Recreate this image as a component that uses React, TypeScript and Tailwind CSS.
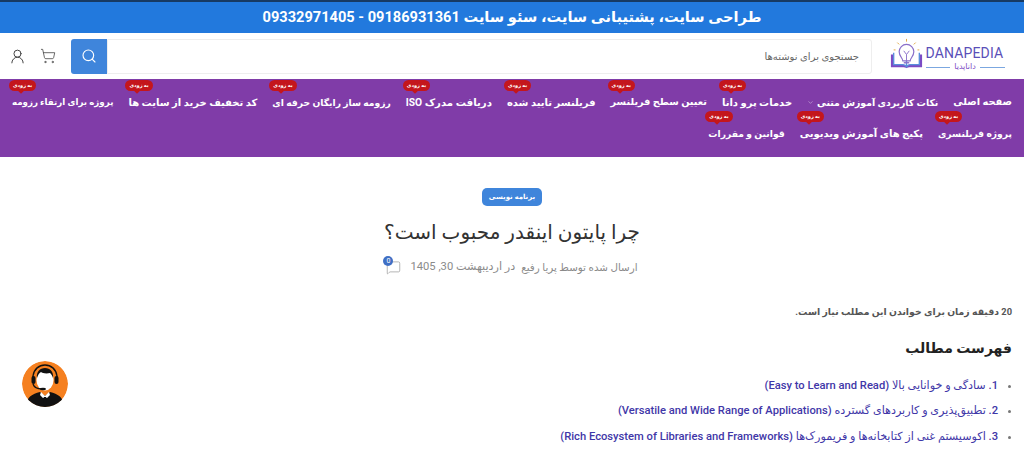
import { Search, ShoppingCart, UserRound, ChevronDown, MessageSquare } from "lucide-react"

const font = "font-['Roboto','DejaVu_Sans',sans-serif]"

const row1 = [
  { label: "صفحه اصلی", size: "text-[9.8px]" },
  { label: "نکات کاربردی آموزش متنی", chevron: true, size: "text-[9.3px]" },
  { label: "خدمات پرو دانا", badge: true, size: "text-[10px]" },
  { label: "تعیین سطح فریلنسر", badge: true, size: "text-[9.7px]" },
  { label: "فریلنسر تایید شده", badge: true, size: "text-[10px]" },
  { label: "دریافت مدرک ISO", badge: true, size: "text-[10.2px]" },
  { label: "رزومه ساز رایگان حرفه ای", badge: true, size: "text-[9.2px]" },
  { label: "کد تخفیف خرید از سایت ها", badge: true, size: "text-[10px]" },
  { label: "پروژه برای ارتقاء رزومه", badge: true, size: "text-[8.7px]" },
]

const row2 = [
  { label: "پروژه فریلنسری", badge: true, size: "text-[9.2px]" },
  { label: "پکیج های آموزش ویدیویی", badge: true, size: "text-[10px]" },
  { label: "قوانین و مقررات", badge: true, size: "text-[9.2px]" },
]

const toc = [
  "1. سادگی و خوانایی بالا (Easy to Learn and Read)",
  "2. تطبیق‌پذیری و کاربردهای گسترده (Versatile and Wide Range of Applications)",
  "3. اکوسیستم غنی از کتابخانه‌ها و فریمورک‌ها (Rich Ecosystem of Libraries and Frameworks)",
]

function NavItem({ label, badge, chevron, size }: { label: string; badge?: boolean; chevron?: boolean; size: string }) {
  return (
    <div className={`relative flex items-center gap-[3px] h-[31px] whitespace-nowrap font-bold text-white ${size}`}>
      {badge && (
        <span className="absolute -top-[7px] -left-[3px] h-[11px] px-[4px] rounded-full bg-[#c4161c] text-[5px] leading-[11px] text-white">
          به زودی
          <span className="absolute left-[10px] -bottom-[1.5px] w-[4px] h-[4px] rotate-45 bg-[#c4161c]" />
        </span>
      )}
      <span>{label}</span>
      {chevron && <ChevronDown size={7} strokeWidth={1.5} className="text-white/80" />}
    </div>
  )
}

function Logo() {
  return (
    <div className="flex items-start gap-[3px] -mt-[2px]" dir="ltr">
      <svg width="33" height="33" viewBox="0 0 36 34" fill="none">
        <path d="M1 17v14h14c2 0 3 1 3 1s1-1 3-1h14V17h-3v11H22c-2 0-4 2-4 2s-2-2-4-2H4V17z" fill="#7b4bc4" />
        <path d="M4 15v13h10c2 0 4 2 4 2V22" stroke="#5a8fdc" strokeWidth="1.5" />
        <path d="M32 15v13H22c-2 0-4 2-4 2" stroke="#5a8fdc" strokeWidth="1.5" />
        <path d="M14 24c0-3-4-5-4-10a8 8 0 0 1 16 0c0 5-4 7-4 10z" stroke="#8a6fc9" strokeWidth="1.3" fill="#fff" />
        <path d="M15 13l3 4 3-4M18 17v7" stroke="#8a6fc9" strokeWidth="1" />
        <path d="M15 26h6" stroke="#8a6fc9" strokeWidth="1.5" />
        <path d="M18 0v3M8 4l2 2M28 4l-2 2M4 12h2M30 12h2" stroke="#e0a33a" strokeWidth="1" />
      </svg>
      <div className="flex flex-col items-stretch w-[79px] pt-[8px]">
        <span className="font-['Roboto',sans-serif] text-[14px] leading-[15px] font-normal tracking-[0.15px] text-[#5a4fb8]">DANAPEDIA</span>
        <div className="flex items-center gap-1 mt-[1px]">
          <span className="h-px flex-1 bg-[#7ba7e0]" />
          <span className="text-[8px] leading-[10px] text-[#7b4bc4]">داناپدیا</span>
          <span className="h-px flex-1 bg-[#7ba7e0]" />
        </div>
      </div>
    </div>
  )
}

function Operator() {
  return (
    <svg width="46" height="46" viewBox="0 0 46 46" className="rounded-full">
      <circle cx="23" cy="23" r="23" fill="#f58020" />
      <path d="M4 44c1-8 6-11 14-13l5 4 5-4c8 2 13 5 14 13-5 2-12 2-19 2S9 46 4 44z" fill="#111" />
      <path d="M19 31l4 4 4-4 1 3-3 3-2-1-2 1-3-3z" fill="#fff" />
      <path d="M22 36h2l1 7-2 2-2-2z" fill="#111" />
      <ellipse cx="23" cy="19" rx="8.5" ry="10.5" fill="#fff" />
      <path d="M15 17c-1-6 3-10 8-10s9 4 8 10c-1-3-2-4-3-5-4 1-8 0-9-1-2 1-3 3-4 6z" fill="#111" />
      <path d="M11 21v-6C12 8 17 4 23 4s11 4 12 11v6" stroke="#111" strokeWidth="1.4" fill="none" />
      <rect x="9.5" y="15" width="4" height="8" rx="2" fill="#111" />
      <rect x="32.5" y="15" width="4" height="8" rx="2" fill="#111" />
      <path d="M11 23c1 3 4 5 9 5" stroke="#111" strokeWidth="1.3" fill="none" />
      <ellipse cx="21" cy="28" rx="3" ry="1.3" fill="#111" />
    </svg>
  )
}

export default function App() {
  return (
    <div className={`${font} relative h-[449px] overflow-hidden bg-white`} dir="rtl">
      <div className="border-t-2 border-[#173a63] bg-[#2279dd] h-[33px] flex items-center justify-center">
        <p className="text-[14.6px] font-bold text-white whitespace-nowrap">
          طراحی سایت، پشتیبانی سایت، سئو سایت 09186931361 - 09332971405
        </p>
      </div>

      <header className="h-[46px] flex items-center pr-[19px] pl-[9px] bg-white">
        <div className="w-[116px] shrink-0 flex justify-center">
          <Logo />
        </div>
        <div className="flex flex-1 h-[35px] mr-[17px]">
          <div className="flex-1 flex items-center pr-[12px] border border-[#eeeeee] rounded-r-[3px] text-[10px] text-[#666]">
            جستجوی برای نوشته‌ها
          </div>
          <button className="w-[36px] bg-[#3f85db] rounded-l-[3px] flex items-center justify-center text-white">
            <Search size={16} strokeWidth={1.7} />
          </button>
        </div>
        <div className="flex items-center gap-[14px] mr-[15px] text-[#444]">
          <ShoppingCart size={16} strokeWidth={1.2} />
          <UserRound size={17} strokeWidth={1.4} />
        </div>
      </header>

      <nav className="h-[78px] bg-[#803ca8] pr-[12px] pt-[8px]">
        <div className="flex gap-[15px]">
          {row1.map((item) => (
            <NavItem key={item.label} {...item} />
          ))}
        </div>
        <div className="flex gap-[15px]">
          {row2.map((item) => (
            <NavItem key={item.label} {...item} />
          ))}
        </div>
      </nav>

      <section className="flex flex-col items-center pt-[31px]">
        <span className="h-[18px] px-[7px] rounded-[5px] bg-[#3f85db] text-[7px] font-bold leading-[18px] text-white">برنامه نویسی</span>
        <h1 className="mt-[11px] text-[20px] leading-[30px] font-medium text-[#333]">چرا پایتون اینقدر محبوب است؟</h1>
        <div className="mt-[12px] flex items-center gap-[6px] text-[10.3px] text-[#8a8a8a]">
          <span>ارسال شده توسط پریا رفیع</span>
          <span className="text-[11.2px]">در اردیبهشت 30, 1405</span>
          <span className="relative text-[#888] mr-[3px]">
            <MessageSquare size={15} strokeWidth={1} />
            <span className="absolute -top-[4px] -left-[3px] w-[10px] h-[10px] rounded-full bg-[#3f6fc4] text-[7px] leading-[10px] text-center text-white">0</span>
          </span>
        </div>
      </section>

      <article className="pr-[12px] pt-[28px]">
        <p className="text-[9.3px] font-bold leading-[16px] text-[#555]">20 دقیقه زمان برای خواندن این مطلب نیاز است.</p>
        <h2 className="mt-[15px] text-[14px] leading-[26px] font-bold text-[#222]">فهرست مطالب</h2>
        <ul className="mt-[16px] flex flex-col gap-[8.5px] pr-[14px] list-disc text-[11.2px] font-medium leading-[17px] text-[#3f37a8] marker:text-[#777]">
          {toc.map((t) => (
            <li key={t}>{t}</li>
          ))}
        </ul>
      </article>

      <div className="absolute left-[22px] top-[361px]">
        <Operator />
      </div>
    </div>
  )
}
